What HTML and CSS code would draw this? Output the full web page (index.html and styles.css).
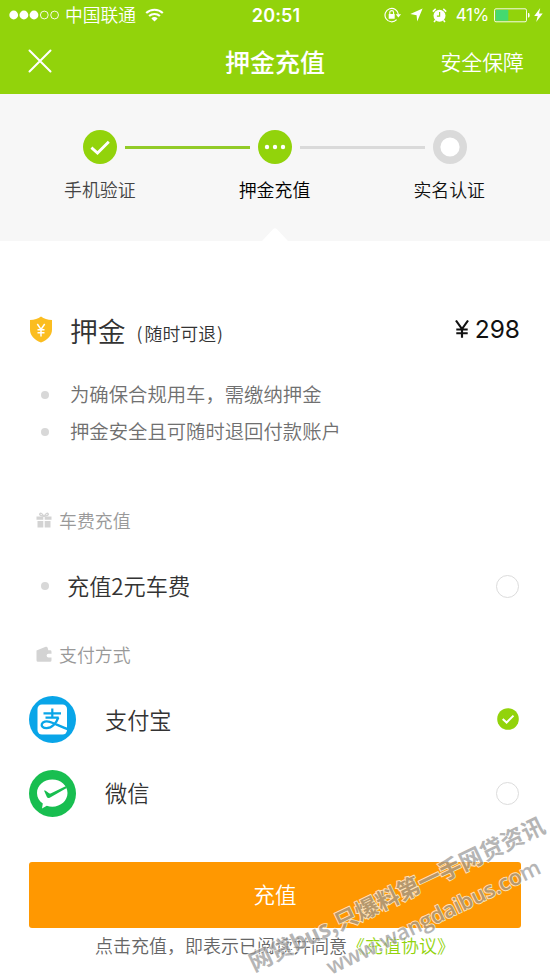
FILE: index.html
```html
<!DOCTYPE html>
<html lang="zh-CN">
<head>
<meta charset="utf-8">
<title>押金充值</title>
<link rel="stylesheet" href="styles.css">
</head>
<body>
<div class="screen">
  <header class="top">
    <div class="status">
      <div class="status-left">
        <svg width="50" height="10" viewBox="0 0 50 10"><g fill="#fff"><circle cx="4.7" cy="5" r="4.4"/><circle cx="14.9" cy="5" r="4.4"/><circle cx="25" cy="5" r="4.4"/></g><g fill="none" stroke="#fff" stroke-width=".9"><circle cx="35.3" cy="5" r="3.9"/><circle cx="45.6" cy="5" r="3.9"/></g></svg>
        <span class="carrier">中国联通</span>
        <svg class="wifi" width="19" height="14" viewBox="0 0 19 14"><g fill="none" stroke="#fff" stroke-width="2.1"><path d="M1.2 5.1a12 12 0 0 1 16.6 0"/><path d="M4.1 8.1a7.8 7.8 0 0 1 10.8 0"/></g><path fill="#fff" d="M6.4 10.4a4.4 4.4 0 0 1 6.2 0L9.5 13.6z"/></svg>
      </div>
      <span class="clock">20:51</span>
      <div class="status-right">
        <svg width="18" height="16" viewBox="0 0 18 16"><path fill="none" stroke="#fff" stroke-width="1.2" d="M12.6 12.7A6.7 6.7 0 1 1 14.4 7.5"/><path fill="#fff" d="M11.7 7.2h5.4l-2.7 3.4zM4.7 7h6v4.8h-6z"/><path fill="none" stroke="#fff" stroke-width="1.1" d="M5.8 7V5.5a1.9 1.9 0 0 1 3.8 0V7"/></svg>
        <svg class="nav" width="13" height="14" viewBox="0 0 13 14"><path fill="#fff" d="M12.6.5 7.2 13.5 6.6 7.3.3 6.1z"/></svg>
        <svg class="alarm" width="15" height="15" viewBox="0 0 15 15"><circle cx="7.5" cy="7.8" r="6" fill="#fff"/><path fill="none" stroke="#fff" stroke-width="1.5" d="M.8 3.6 3.7.9m7.6 0 2.9 2.7M3.5 12.2 2 14m9.5-1.8L13 14"/><path fill="none" stroke="#92d30b" stroke-width="1.2" d="M7.6 4v4.2H4.9"/></svg>
        <span class="percent">41%</span>
        <svg class="battery" width="36" height="15" viewBox="0 0 36 15"><rect x=".5" y=".8" width="32" height="13" rx="1.5" fill="none" stroke="#fff" stroke-width=".9"/><path fill="#45d970" d="M1.6 1.9h12.7v10.8H1.6z"/><path fill="#fff" d="M34 5h.6q1 0 1 2.3t-1 2.3H34z"/></svg>
        <svg class="bolt" width="9" height="14" viewBox="0 0 9 14"><path fill="#fff" d="M6.2 0 .2 8h3.5L2.2 14 8.7 5.6H5z"/></svg>
      </div>
    </div>
    <nav class="bar">
      <svg class="close" width="24" height="24" viewBox="0 0 24 24"><path fill="none" stroke="#fff" stroke-width="2" stroke-linecap="round" d="m1.5 1.5 21 21m0-21-21 21"/></svg>
      <h1>押金充值</h1>
      <a class="safety">安全保障</a>
    </nav>
  </header>

  <section class="steps">
    <div class="track">
      <svg class="dot" viewBox="0 0 34 34"><circle cx="17" cy="17" r="17" fill="#92d30b"/><path fill="none" stroke="#fff" stroke-width="2.8" d="m8.4 17.6 6.1 5.4L25.8 11.7"/></svg>
      <span class="line line-done"></span>
      <svg class="dot" viewBox="0 0 34 34"><circle cx="17" cy="17" r="17" fill="#92d30b"/><g fill="#fff"><circle cx="9" cy="17" r="2.2"/><circle cx="17" cy="17" r="2.2"/><circle cx="25" cy="17" r="2.2"/></g></svg>
      <span class="line"></span>
      <svg class="dot" viewBox="0 0 34 34"><circle cx="17" cy="17" r="13.3" fill="#fff" stroke="#dadada" stroke-width="7.4"/></svg>
    </div>
    <div class="labels"><span class="past">手机验证</span><span class="now">押金充值</span><span>实名认证</span></div>
    <svg class="notch" width="26" height="13" viewBox="0 0 26 13"><path fill="#fff" d="M0 13 11.5.8q1.5-1.2 3 0L26 13z"/></svg>
  </section>

  <main>
    <div class="deposit">
      <svg class="shield" width="24" height="27" viewBox="0 0 24 27"><path fill="#fbbd20" d="M12 .5c3 2.3 6.500 3.400 11 3.600v9.300c0 6-4.300 10.200-11 13.100C5.300 23.600 1 19.400 1 13.400V4.100C5.500 3.900 9 2.800 12 .5z"/><path fill="none" stroke="#fff" stroke-width="1.5" d="m8.300 8 3.700 5.500L15.700 8M12 13.500V20.500M8.500 13.800h7M8.500 16.800h7"/></svg>
      <h2>押金</h2><span class="refund">(<span>随时可退</span>)</span>
      <span class="amount"><svg width="14" height="18" viewBox="0 0 13 18" preserveAspectRatio="none" aria-label="¥"><path fill="none" stroke="#111" stroke-width="2" d="M.9.5 6.500 9 12.100.5M6.500 9v8.700M1.200 9.500h10.600M1.200 13.200h10.600"/></svg>298</span>
    </div>
    <ul class="notes"><li>为确保合规用车，需缴纳押金</li><li>押金安全且可随时退回付款账户</li></ul>

    <div class="section-title">
      <svg width="16" height="16" viewBox="0 0 16 16"><path fill="#d3d3d3" d="M.5 4.400h6.800v3.300H.5zm8.200 0h6.800v3.300H8.700zM1.500 9h5.800v6.500H1.500zm7.200 0h5.800v6.500H8.700z"/><path fill="none" stroke="#d3d3d3" stroke-width="1.300" d="M7.700 4.300C6.500 1.500 4.600.5 3.800 1.800S5.500 4 7.700 4.300zm.6 0c1.200-2.800 3.100-3.800 3.900-2.500S10.500 4 8.300 4.300z"/></svg><span>车费充值</span>
    </div>
    <div class="ride"><i></i><span>充值2元车费</span><b class="radio"></b></div>
    <div class="section-title pay-title">
      <svg width="16" height="16" viewBox="0 0 16 16"><path fill="#d3d3d3" d="M.5 4.500 9.700.8q1.500-.4 2 1.200l.6 2.300h1.800q1.400 0 1.400 1.400v2H12.500a1.900 1.900 0 0 0 0 3.800h3v2.700q0 1.500-1.500 1.500H2Q.5 15.700.5 14.200z"/></svg><span>支付方式</span>
    </div>
    <div class="method">
      <svg class="logo" viewBox="0 0 47 47"><circle cx="23.500" cy="23.500" r="23.500" fill="#09a5e8"/><rect x="8.500" y="8.500" width="29.500" height="30" rx="4.500" fill="#fff"/><path fill="none" stroke="#09a5e8" stroke-width="2.200" d="M14.500 17.300h17.500M23.300 12.500v9M16.500 21.700h13.200"/><path fill="none" stroke="#09a5e8" stroke-width="2.300" d="M29.300 21.500c-2 5.700-6.300 10.700-11.800 10.700-3.600 0-5.300-2-4.700-4 .7-2.600 4.500-3.500 8-2.300 4.800 1.500 9.500 4.200 18.500 7.500"/></svg>
      <span>支付宝</span>
      <svg class="checked" width="22" height="22" viewBox="0 0 22 22"><circle cx="11" cy="11" r="10.800" fill="#92d30b"/><path fill="none" stroke="#fff" stroke-width="2" d="m5.700 11 3.900 3.500 6.900-6.900"/></svg>
    </div>
    <div class="method">
      <svg class="logo" viewBox="0 0 47 47"><circle cx="23.500" cy="23.500" r="23.500" fill="#18be50"/><path fill="#fff" d="M23.300 9.500c8.600 0 15.200 6 15.200 13.500s-6.600 13.700-15.200 13.700c-2 0-3.700-.3-5.500-.9L13 38.500l.8-5.100C10.200 31 8 27.500 8 23c0-7.500 6.700-13.500 15.300-13.500z"/><path fill="#18be50" d="M15 20.600q1-.7 3 1.100l2.100 1.500q1 .5 2 0l14.500-7 1.100 1.700-17 9.800q-2 1-2.800-.8z"/></svg>
      <span>微信</span><b class="radio"></b>
    </div>
    <button class="submit" type="button">充值</button>
    <p class="terms">点击充值，即表示已阅读并同意<a>《充值协议》</a></p>
  </main>
  <svg class="watermark" width="320" height="179" viewBox="230 800 320 179">
    <text class="wm-cn" transform="translate(254 972) rotate(-25.600)" textLength="325">网贷bus,只爆料第一手网贷资讯</text>
    <text class="wm-url" transform="translate(331 975) rotate(-25.800)" textLength="235">www.wangdaibus.com</text>
  </svg>
</div>
</body>
</html>
```
FILE: styles.css
```css
* { box-sizing: border-box; }
body { margin: 0; background: #fff; font-family: "Noto Sans CJK SC", sans-serif; font-weight: 350; color: #333; }
svg { display: block; flex: none; }
h1, h2, p, ul { margin: 0; padding: 0; }
.screen { position: relative; width: 550px; height: 979px; overflow: hidden; }

.top { height: 94px; background: #92d30b; color: #fff; }
.status { height: 30px; display: grid; grid-template-columns: 1fr auto 1fr; align-items: center; padding: 0 7px 0 9px; line-height: 30px; }
.status-left, .status-right { display: flex; align-items: center; }
.status-right { justify-content: flex-end; }
.carrier { margin: -1px 0 0 6px; font-size: 17.8px; line-height: 29px; }
.wifi { margin-left: 9px; }
.clock { padding-top: 1px; font: 600 18px/29px Inter, sans-serif; letter-spacing: .1px; }
.nav { margin-left: 8px; }
.alarm { margin-left: 9px; }
.percent { margin-left: 9px; font: 400 17px/30px Inter, sans-serif; letter-spacing: -.3px; }
.battery { margin-left: 5px; }
.bolt { margin-left: 4px; }
.bar { height: 64px; display: grid; grid-template-columns: 1fr auto 1fr; align-items: center; padding: 0 26px 0 28px; }
.bar .close { margin-top: -2px; }
.bar h1 { margin: -2px 2px 0 0; font-size: 25px; font-weight: 500; line-height: 36px; }
.safety { justify-self: end; margin-top: -3px; font-size: 20.9px; line-height: 30px; }

.steps { position: relative; height: 147px; padding-top: 36px; background: #f7f7f7; }
.track { display: flex; align-items: center; justify-content: space-between; margin: 0 83px; }
.dot { width: 34px; height: 34px; }
.line { width: 125px; height: 3px; background: #dadada; }
.line-done { background: #92cb28; }
.labels { display: flex; justify-content: space-between; margin: 11px 65px 0 64px; font-size: 17.900px; line-height: 28px; color: #111; }
.labels .past { color: #444; }
.labels .now { color: #000; }
.notch { position: absolute; left: 262px; bottom: 0; }

main { padding: 67px 29px 0; }
.deposit { height: 43px; display: flex; align-items: center; }
.shield { margin-top: -1px; }
.deposit h2 { margin-left: 17px; font-size: 27.800px; font-weight: 350; }
.refund { margin: 6px 0 0 11px; font-size: 17.900px; }
.refund span { margin: 0 1px 0 2px; }
.amount { margin: -1px 0 0 auto; padding-right: 1px; display: flex; align-items: center; gap: 7px; font: 400 24.500px/30px Inter, sans-serif; color: #111; }
.amount svg { margin-right: -1px; }
.notes { margin-top: 25px; list-style: none; font-size: 19.350px; line-height: 37px; color: #707070; }
.notes li { display: flex; align-items: center; padding-left: 12px; }
.notes li::before, .ride i { content: ""; width: 8px; height: 8px; border-radius: 50%; background: #d8d8d8; }
.notes li::before { margin-right: 21px; }
.section-title { display: flex; align-items: center; gap: 7px; height: 30px; margin-top: 55px; padding-left: 7px; font-size: 17.900px; color: #999; }
.section-title span { margin-top: -1px; }
.ride { display: flex; align-items: center; height: 40px; margin-top: 31px; padding-left: 12px; font-size: 22.200px; }
.ride span { margin: -2px 0 0 18px; }
.radio { width: 23px; height: 23px; margin: 0 2px 0 auto; border: 1px solid #dcdcdc; border-radius: 50%; }
.pay-title { margin-top: 33px; margin-bottom: 14px; }
.method { display: flex; align-items: center; height: 73.500px; font-size: 22.200px; }
.logo { width: 47px; height: 47px; }
.method span { margin: -2px 0 0 29px; }
.checked { margin: -1px 2px 0 auto; }
.submit { display: block; width: 492px; height: 66px; margin-top: 32px; padding: 0 0 2px; border: 0; border-radius: 3px; background: #ff9801; color: #fff; font: 350 21.500px/64px "Noto Sans CJK SC", sans-serif; }
.terms { margin: 3px 0 0 66px; font-size: 18px; line-height: 28px; color: #666; white-space: nowrap; }
.terms a { color: #92d30b; }

.watermark { position: absolute; right: 0; bottom: 0; pointer-events: none; opacity: .72; }
.watermark text { fill: #999; stroke: #fff; stroke-width: 1.800px; paint-order: stroke; }
.wm-cn { font: 700 23px "Noto Sans CJK SC", sans-serif; }
.wm-url { font: 600 21.800px "Open Sans", sans-serif; }
```
